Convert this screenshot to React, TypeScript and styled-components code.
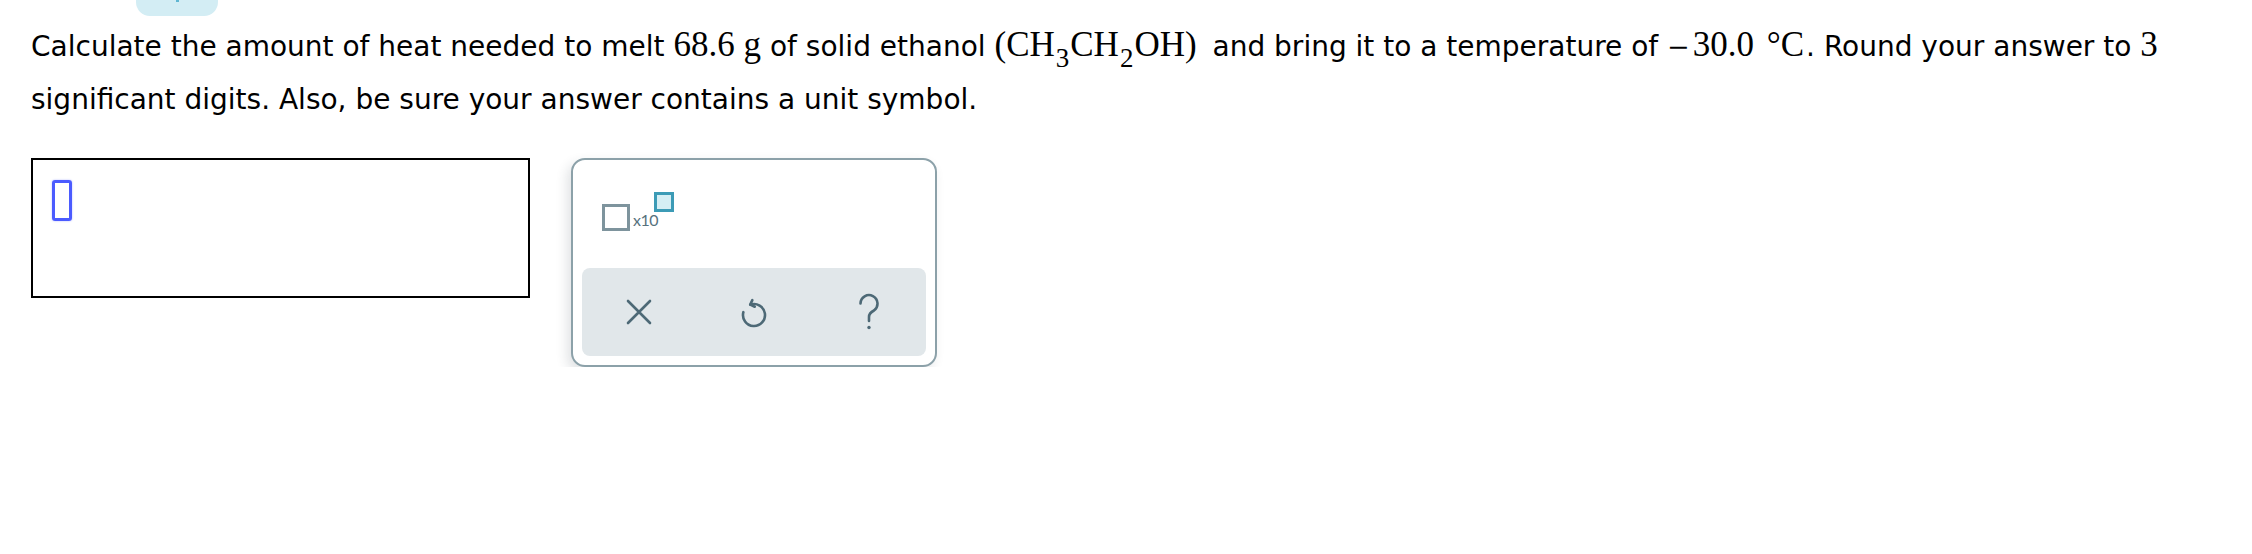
import { createGlobalStyle } from "styled-components";
import styled from "styled-components";

const GlobalStyle = createGlobalStyle`
  body {
    margin: 0;
    background: #fff;
    color: #000;
    font-family: "DejaVu Sans", Verdana, sans-serif;
  }
`;

const Page = styled.div`
  padding-left: 31px;
`;

const Tab = styled.div`
  margin-left: 105px;
  width: 82px;
  height: 16px;
  background: #d3edf4;
  border-radius: 0 0 14px 14px;
  display: flex;
  justify-content: center;
`;

const TabMark = styled.span`
  width: 3px;
  height: 2px;
  background: #5fb6d2;
`;

const Question = styled.p`
  margin: 4px 0 0;
  font-size: 28px;
  line-height: 53px;
  white-space: nowrap;
`;

const Math = styled.span<{ $gap?: number }>`
  font-family: "Liberation Serif", "Times New Roman", serif;
  font-size: 35px;
  line-height: 1;
  margin-right: ${(p) => p.$gap ?? 0}px;
`;

const Minus = styled.span`
  font-family: "DejaVu Serif", serif;
  font-size: 27px;
  line-height: 1;
  margin-right: 3px;
`;

const Sub = styled.span`
  font-size: 27px;
  line-height: 1;
  vertical-align: -11px;
  margin: 0 1px;
`;

const AnswerRow = styled.div`
  display: flex;
  align-items: flex-start;
  margin-top: 32px;
`;

const AnswerBox = styled.div`
  box-sizing: border-box;
  width: 499px;
  height: 140px;
  border: 2px solid #000;
  padding: 20px 0 0 19px;
`;

const Cursor = styled.div`
  box-sizing: border-box;
  width: 20px;
  height: 41px;
  border: 3px solid #4b5bff;
  border-radius: 3px;
  box-shadow: 0 0 2px rgba(75, 91, 255, 0.45);
`;

const Keypad = styled.div`
  box-sizing: border-box;
  margin: 0 0 0 41px;
  width: 366px;
  height: 209px;
  border: 2px solid #8ca1a9;
  border-radius: 14px;
  padding: 9px;
  display: flex;
  flex-direction: column;
  background: #fff;
  box-shadow: -4px 5px 12px rgba(40, 60, 70, 0.14);
`;

const TopArea = styled.div`
  flex: 1;
  padding: 23px 0 0 20px;
`;

const X10Button = styled.div`
  display: inline-flex;
  align-items: flex-start;
`;

const BaseBox = styled.span`
  box-sizing: border-box;
  width: 28px;
  height: 27px;
  margin-top: 12px;
  border: 3px solid #7e949d;
`;

const X10Label = styled.span`
  margin: 20px 0 0 3px;
  font-family: Lato, "Open Sans", sans-serif;
  font-size: 16px;
  line-height: 1;
  letter-spacing: -0.5px;
  color: #56717d;
`;

const ExpBox = styled.span`
  box-sizing: border-box;
  width: 20px;
  height: 20px;
  margin-left: -4px;
  border: 3px solid #3c9bb6;
  background: #d5eef4;
`;

const ActionBar = styled.div`
  height: 88px;
  border-radius: 8px;
  background: #e1e7ea;
  display: grid;
  grid-template-columns: repeat(3, 1fr);
  align-items: center;
  justify-items: center;
`;

const IconButton = styled.button`
  border: 0;
  background: transparent;
  padding: 0;
  display: flex;
  align-items: center;
  justify-content: center;
  color: #4d6976;
  cursor: pointer;
`;

const ClearIcon = () => (
  <svg width="26" height="26" viewBox="0 0 26 26" fill="none" stroke="currentColor" strokeWidth="2.6" strokeLinecap="round">
    <path d="M2 2 L24 24 M24 2 L2 24" />
  </svg>
);

const UndoIcon = () => (
  <svg width="28" height="31" viewBox="0 0 28 31" fill="none" stroke="currentColor" strokeWidth="2.6" strokeLinecap="round" strokeLinejoin="round">
    <path d="M10.24 7.66 A11 11 0 1 1 3.37 15.15" />
    <path d="M12.35 3.13 L10.24 7.66 L14.77 9.77" />
  </svg>
);

const HelpIcon = () => (
  <svg width="26" height="38" viewBox="0 0 26 38" fill="none" stroke="currentColor" strokeWidth="2.6" strokeLinecap="round">
    <path d="M4.5 10.5 A8.5 8.5 0 1 1 18 17.5 C14.6 19.2 13 21 13 24 V28" />
    <circle cx="13" cy="34.5" r="1.7" fill="currentColor" stroke="none" />
  </svg>
);

export default function App() {
  return (
    <>
      <GlobalStyle />
      <Page>
        <Tab>
          <TabMark />
        </Tab>
        <Question>
          Calculate the amount of heat needed to melt <Math>68.6</Math> <Math>g</Math> of solid
          ethanol{"  "}
          <Math $gap={7}>
            (CH<Sub>3</Sub>CH<Sub>2</Sub>OH)
          </Math>{" "}
          and bring it to a temperature of{" "}
          <Math $gap={2}>
            <Minus>−</Minus>30.0<Math $gap={4}> </Math>°C
          </Math>
          . Round your answer to <Math>3</Math>
          <br />
          significant digits. Also, be sure your answer contains a unit symbol.
        </Question>
        <AnswerRow>
          <AnswerBox>
            <Cursor />
          </AnswerBox>
          <Keypad>
            <TopArea>
              <X10Button>
                <BaseBox />
                <X10Label>x10</X10Label>
                <ExpBox />
              </X10Button>
            </TopArea>
            <ActionBar>
              <IconButton aria-label="clear">
                <ClearIcon />
              </IconButton>
              <IconButton aria-label="undo">
                <UndoIcon />
              </IconButton>
              <IconButton aria-label="help">
                <HelpIcon />
              </IconButton>
            </ActionBar>
          </Keypad>
        </AnswerRow>
      </Page>
    </>
  );
}
